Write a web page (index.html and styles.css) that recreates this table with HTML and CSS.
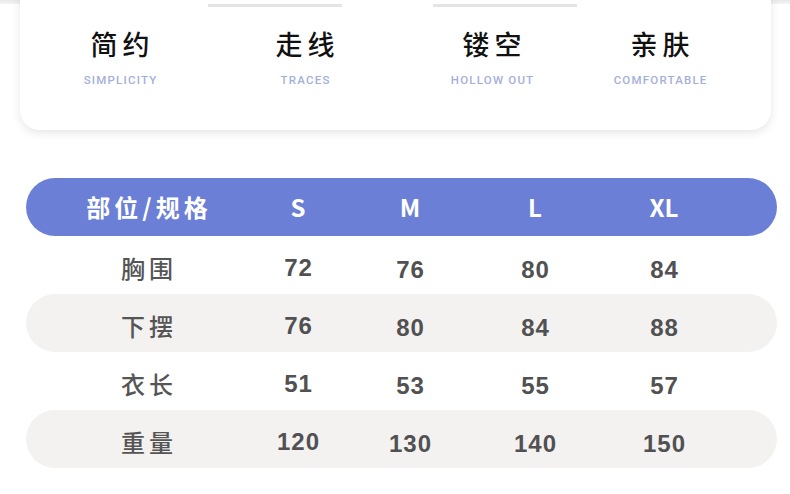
FILE: index.html
```html
<!DOCTYPE html>
<html lang="zh">
<head>
<meta charset="utf-8">
<link rel="stylesheet" href="styles.css">
</head>
<body>
<div class="topband"></div>
<section class="features">
  <div class="tabs">
    <span class="tab tab-a"></span>
    <span class="tab tab-b"></span>
  </div>
  <div class="feature-grid">
    <div class="feature"><div class="f-title">简约</div><div class="f-sub">SIMPLICITY</div></div>
    <div class="feature"><div class="f-title">走线</div><div class="f-sub">TRACES</div></div>
    <div class="feature"><div class="f-title">镂空</div><div class="f-sub">HOLLOW OUT</div></div>
    <div class="feature"><div class="f-title">亲肤</div><div class="f-sub">COMFORTABLE</div></div>
  </div>
</section>
<section class="size-table">
  <div class="row head">
    <div class="cell label">部位/规格</div>
    <div class="cell">S</div>
    <div class="cell">M</div>
    <div class="cell">L</div>
    <div class="cell">XL</div>
  </div>
  <div class="row">
    <div class="cell label">胸围</div>
    <div class="cell num">72</div>
    <div class="cell num">76</div>
    <div class="cell num">80</div>
    <div class="cell num">84</div>
  </div>
  <div class="row shade">
    <div class="cell label">下摆</div>
    <div class="cell num">76</div>
    <div class="cell num">80</div>
    <div class="cell num">84</div>
    <div class="cell num">88</div>
  </div>
  <div class="row">
    <div class="cell label">衣长</div>
    <div class="cell num">51</div>
    <div class="cell num">53</div>
    <div class="cell num">55</div>
    <div class="cell num">57</div>
  </div>
  <div class="row shade">
    <div class="cell label">重量</div>
    <div class="cell num">120</div>
    <div class="cell num">130</div>
    <div class="cell num">140</div>
    <div class="cell num">150</div>
  </div>
</section>
</body>
</html>
```
FILE: styles.css
```css
* { box-sizing: border-box; }
html, body { margin: 0; padding: 0; }
body {
  width: 790px;
  height: 494px;
  overflow: hidden;
  background: #fff;
  font-family: "Noto Sans CJK SC", "Noto Sans", sans-serif;
}
.topband {
  height: 4px;
  background: linear-gradient(#e9e9e9, #f3f3f3);
}
.features {
  width: 751px;
  height: 150px;
  margin: -24px 0 0 20px;
  background: #fff;
  border-radius: 20px;
  box-shadow: 0 3px 10px rgba(0, 0, 0, 0.10);
  padding-top: 24px;
  position: relative;
}
.tabs {
  display: flex;
  height: 3px;
  padding-left: 188px;
}
.tab {
  display: block;
  height: 3px;
  background: #e4e4e4;
}
.tab-a { width: 134px; }
.tab-b { width: 144px; margin-left: 91px; }
.feature-grid {
  display: grid;
  grid-template-columns: 160px 210px 164px 172px;
  padding-left: 20px;
  padding-top: 20px;
}
.feature {
  display: flex;
  flex-direction: column;
  align-items: center;
}
.f-title {
  font-size: 27px;
  line-height: 34px;
  letter-spacing: 5px;
  padding-left: 5px;
  color: #111;
  font-weight: 500;
}
.f-sub {
  margin-top: 12px;
  font-family: Roboto, "Liberation Sans", sans-serif;
  font-weight: 500;
  font-size: 11.5px;
  line-height: 14px;
  letter-spacing: 1.2px;
  padding-left: 1.2px;
  color: #a4afdc;
}
.size-table {
  width: 751px;
  margin: 48px 0 0 26px;
}
.row {
  display: grid;
  grid-template-columns: 150px 152px 72px 178px 80px;
  padding-left: 46px;
  height: 58px;
  align-items: center;
  border-radius: 29px;
}
.row.head {
  background: #6b7fd7;
}
.row.shade {
  background: #f3f2f1;
}
.cell {
  text-align: center;
  line-height: 58px;
  white-space: nowrap;
}
.head .cell {
  color: #fff;
  font-weight: 700;
  font-size: 24px;
}
.head .cell.label {
  font-size: 24px;
  letter-spacing: 2px;
  padding-left: 2px;
}
.row .cell.label {
  font-size: 24px;
  letter-spacing: 4px;
  padding-left: 4px;
}
.row:not(.head) .cell.label {
  color: #555;
  font-weight: 500;
}
.cell.num {
  font-family: "Liberation Sans", Arial, sans-serif;
  font-weight: 700;
  font-size: 24px;
  letter-spacing: 1px;
  padding-left: 1px;
  color: #515151;
  margin-top: 1px;
}
.cell.num:nth-child(n+3) {
  margin-top: 5px;
}
```
